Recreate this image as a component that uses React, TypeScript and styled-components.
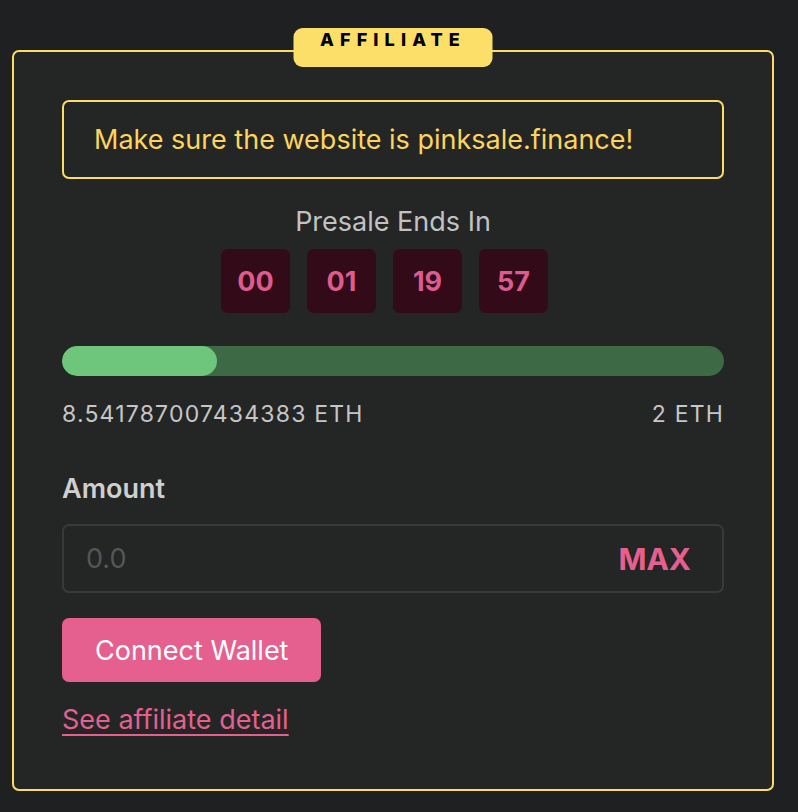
import React from "react";
import styled, { createGlobalStyle } from "styled-components";

const Global = createGlobalStyle`
  html, body { margin: 0; padding: 0; background: #1f2022; }
  body { font-family: Inter, "Noto Sans", "Liberation Sans", sans-serif; }
  * { box-sizing: border-box; }
`;

const Page = styled.div`
  padding: 50px 24px 20px 12px;
  min-height: 812px;
`;

const Card = styled.section`
  position: relative;
  width: 762px;
  background: #242525;
  border: 2px solid #fcdc66;
  border-radius: 7px;
  padding: 48px 48px 54px 48px;
  display: flex;
  flex-direction: column;
`;

const Badge = styled.div`
  position: absolute;
  top: -24px;
  left: 50%;
  transform: translateX(-50%);
  width: 199px;
  height: 39px;
  background: #fcdf68;
  border-radius: 9px;
  color: #000;
  font-weight: 800;
  font-size: 18px;
  line-height: 24px;
  letter-spacing: 0.34em;
  text-align: center;
`;

const Notice = styled.div`
  border: 2px solid #fcdc66;
  border-radius: 7px;
  padding: 22px 30px;
  color: #fcd45e;
  font-size: 27px;
  line-height: 31px;
`;

const Title = styled.div`
  margin-top: 28px;
  text-align: center;
  color: #c2c2c2;
  font-size: 27px;
  line-height: 30px;
`;

const Timer = styled.div`
  margin-top: 12px;
  display: flex;
  justify-content: center;
  gap: 17px;
  padding-right: 17px;
`;

const TimeBox = styled.div`
  width: 69px;
  height: 64px;
  border-radius: 7px;
  background: #330a18;
  color: #dd5b8d;
  font-weight: 700;
  font-size: 27px;
  display: flex;
  align-items: center;
  justify-content: center;
`;

const Track = styled.div`
  margin-top: 33px;
  height: 30px;
  border-radius: 15px;
  background: #3d6a45;
  overflow: hidden;
`;

const Fill = styled.div`
  height: 100%;
  border-radius: 15px;
  background: #6dc67b;
`;

const Range = styled.div`
  margin-top: 24px;
  display: flex;
  justify-content: space-between;
  color: #c6c6c6;
  font-size: 23px;
  line-height: 28px;
  letter-spacing: 1.2px;
`;

const Label = styled.div`
  margin-top: 46px;
  color: #cfcfcf;
  font-size: 27px;
  font-weight: 600;
  line-height: 30px;
`;

const InputBox = styled.div`
  margin-top: 20px;
  height: 69px;
  border: 2px solid #38393c;
  border-radius: 7px;
  display: flex;
  align-items: center;
  padding: 0 31px 0 22px;
`;

const Input = styled.input`
  flex: 1;
  min-width: 0;
  background: transparent;
  border: none;
  outline: none;
  padding: 0;
  color: #e0e0e0;
  font-family: inherit;
  font-size: 27px;
  &::placeholder { color: #555657; }
`;

const Max = styled.button`
  background: none;
  border: none;
  padding: 0;
  color: #e6608f;
  font-family: inherit;
  font-weight: 700;
  font-size: 30px;
  cursor: pointer;
`;

const Connect = styled.button`
  margin-top: 25px;
  align-self: flex-start;
  height: 64px;
  padding: 0 33px;
  border: none;
  border-radius: 7px;
  background: #e6608f;
  color: #fff;
  font-family: inherit;
  font-size: 27px;
  cursor: pointer;
`;

const Link = styled.a`
  margin-top: 23px;
  align-self: flex-start;
  color: #e6608f;
  font-size: 27px;
  line-height: 30px;
  text-decoration: underline;
  text-underline-offset: 5px;
  text-decoration-thickness: 2px;
`;

export default function App() {
  const raised = 8.541787007434383;
  const pct = 23.4;
  return (
    <Page>
      <Global />
      <Card>
        <Badge>AFFILIATE</Badge>
        <Notice>Make sure the website is pinksale.finance!</Notice>
        <Title>Presale Ends In</Title>
        <Timer>
          {["00", "01", "19", "57"].map((t, i) => (
            <TimeBox key={i}>{t}</TimeBox>
          ))}
        </Timer>
        <Track>
          <Fill style={{ width: `${pct}%` }} />
        </Track>
        <Range>
          <span>{raised} ETH</span>
          <span>2 ETH</span>
        </Range>
        <Label>Amount</Label>
        <InputBox>
          <Input placeholder="0.0" />
          <Max>MAX</Max>
        </InputBox>
        <Connect>Connect Wallet</Connect>
        <Link href="#">See affiliate detail</Link>
      </Card>
    </Page>
  );
}
